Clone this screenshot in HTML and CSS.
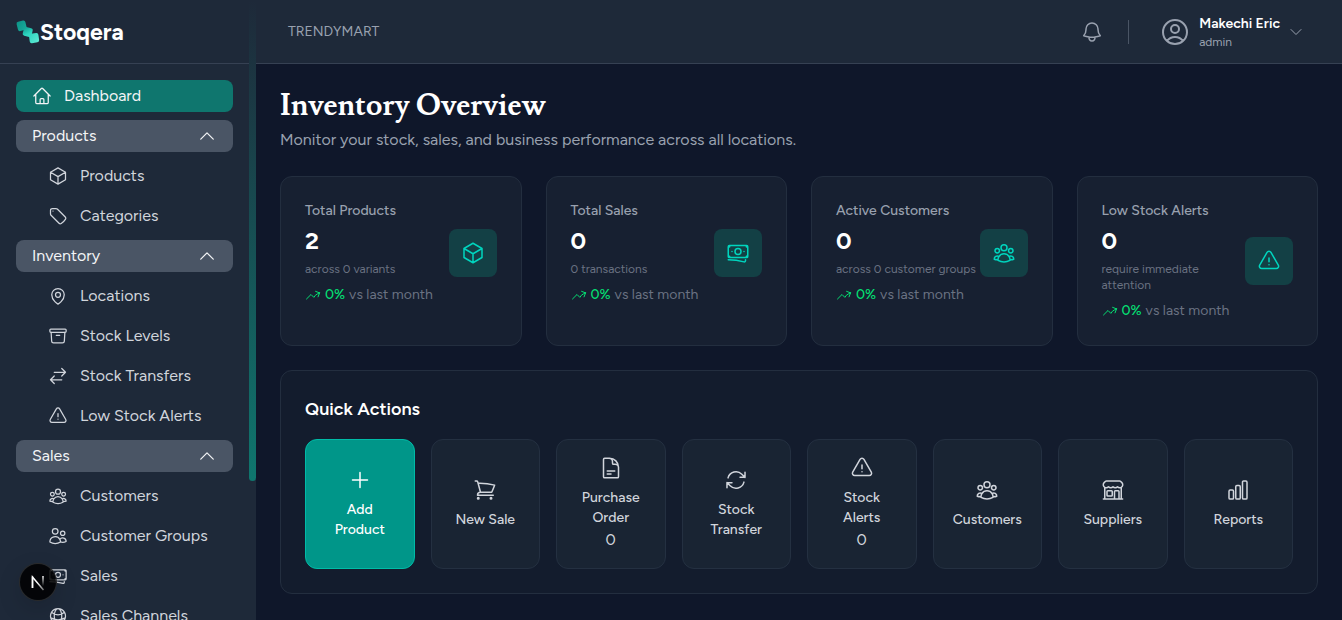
FILE: index.html
```html
<!DOCTYPE html>
<html lang="en">
<head>
<meta charset="utf-8">
<meta name="viewport" content="width=device-width, initial-scale=1">
<title>Stoqera</title>
<link rel="stylesheet" href="styles.css">
</head>
<body>
<svg class="sprite" aria-hidden="true">
  <symbol id="home" viewBox="0 0 24 24"><path d="M2.25 12l8.954-8.955c.44-.439 1.152-.439 1.591 0L21.75 12M4.5 9.75v10.125c0 .621.504 1.125 1.125 1.125H9.75v-4.875c0-.621.504-1.125 1.125-1.125h2.25c.621 0 1.125.504 1.125 1.125V21h4.125c.621 0 1.125-.504 1.125-1.125V9.75M8.25 21h8.25"/></symbol>
  <symbol id="cube" viewBox="0 0 24 24"><path d="M21 7.5l-9-5.25L3 7.5m18 0l-9 5.25m9-5.25v9l-9 5.25M3 7.5l9 5.25M3 7.5v9l9 5.25m0-9v9"/></symbol>
  <symbol id="tag" viewBox="0 0 24 24"><path d="M9.568 3H5.25A2.25 2.25 0 003 5.25v4.318c0 .597.237 1.17.659 1.591l9.581 9.581c.699.699 1.78.872 2.607.33a18.095 18.095 0 005.223-5.223c.542-.827.369-1.908-.33-2.607L11.16 3.66A2.25 2.25 0 009.568 3z"/><path d="M6 6h.008v.008H6V6z"/></symbol>
  <symbol id="pin" viewBox="0 0 24 24"><path d="M15 10.5a3 3 0 11-6 0 3 3 0 016 0z"/><path d="M19.5 10.5c0 7.142-7.5 11.25-7.5 11.25S4.5 17.642 4.5 10.5a7.5 7.5 0 1115 0z"/></symbol>
  <symbol id="archive" viewBox="0 0 24 24"><path d="M20.25 7.5l-.625 10.632a2.25 2.25 0 01-2.247 2.118H6.622a2.25 2.25 0 01-2.247-2.118L3.75 7.5M10 11.25h4M3.375 7.5h17.25c.621 0 1.125-.504 1.125-1.125v-1.5c0-.621-.504-1.125-1.125-1.125H3.375c-.621 0-1.125.504-1.125 1.125v1.5c0 .621.504 1.125 1.125 1.125z"/></symbol>
  <symbol id="transfer" viewBox="0 0 24 24"><path d="M7.5 21L3 16.5m0 0L7.5 12M3 16.5h13.5m0-13.5L21 7.5m0 0L16.5 12M21 7.5H7.5"/></symbol>
  <symbol id="alert" viewBox="0 0 24 24"><path d="M12 9v3.75m-9.303 3.376c-.866 1.5.217 3.374 1.948 3.374h14.71c1.73 0 2.813-1.874 1.948-3.374L13.949 3.378c-.866-1.5-3.032-1.5-3.898 0L2.697 16.126zM12 15.75h.007v.008H12v-.008z"/></symbol>
  <symbol id="group" viewBox="0 0 24 24"><path d="M18 18.72a9.094 9.094 0 003.741-.479 3 3 0 00-4.682-2.72m.94 3.198l.001.031c0 .225-.012.447-.037.666A11.944 11.944 0 0112 21c-2.17 0-4.207-.576-5.963-1.584A6.062 6.062 0 016 18.719m12 0a5.971 5.971 0 00-.941-3.197m0 0A5.995 5.995 0 0012 12.75a5.995 5.995 0 00-5.058 2.772m0 0a3 3 0 00-4.681 2.72 8.986 8.986 0 003.74.477m.94-3.197a5.971 5.971 0 00-.94 3.197M15 6.75a3 3 0 11-6 0 3 3 0 016 0zm6 3a2.25 2.25 0 11-4.5 0 2.25 2.25 0 014.5 0zm-13.5 0a2.25 2.25 0 11-4.5 0 2.25 2.25 0 014.5 0z"/></symbol>
  <symbol id="users" viewBox="0 0 24 24"><path d="M15 19.128a9.38 9.38 0 002.625.372 9.337 9.337 0 004.121-.952 4.125 4.125 0 00-7.533-2.493M15 19.128v-.003c0-1.113-.285-2.16-.786-3.07M15 19.128v.106A12.318 12.318 0 018.624 21c-2.331 0-4.512-.645-6.374-1.766l-.001-.109a6.375 6.375 0 0111.964-3.07M12 6.375a3.375 3.375 0 11-6.75 0 3.375 3.375 0 016.75 0zm8.25 2.25a2.625 2.625 0 11-5.25 0 2.625 2.625 0 015.25 0z"/></symbol>
  <symbol id="cash" viewBox="0 0 24 24"><path d="M2.25 18.75a60.07 60.07 0 0115.797 2.101c.727.198 1.453-.342 1.453-1.096V18.75M3.75 4.5v.75A.75.75 0 013 6h-.75m0 0v-.375c0-.621.504-1.125 1.125-1.125H20.25M2.25 6v9m18-10.5v.75c0 .414.336.75.75.75h.75m-1.5-1.5h.375c.621 0 1.125.504 1.125 1.125v9.75c0 .621-.504 1.125-1.125 1.125h-.375m1.5-1.5H21a.75.75 0 00-.75.75v.75m0 0H3.75m0 0h-.375a1.125 1.125 0 01-1.125-1.125V15m1.5 1.5v-.75A.75.75 0 003 15h-.75M15 10.5a3 3 0 11-6 0 3 3 0 016 0zm3 0h.008v.008H18V10.5zm-12 0h.008v.008H6V10.5z"/></symbol>
  <symbol id="globe" viewBox="0 0 24 24"><path d="M12 21a9.004 9.004 0 008.716-6.747M12 21a9.004 9.004 0 01-8.716-6.747M12 21c2.485 0 4.5-4.03 4.5-9S14.485 3 12 3m0 18c-2.485 0-4.5-4.03-4.5-9S9.515 3 12 3m0 0a8.997 8.997 0 017.843 4.582M12 3a8.997 8.997 0 00-7.843 4.582m15.686 0A11.953 11.953 0 0112 10.5c-2.998 0-5.74-1.1-7.843-2.918m15.686 0A8.959 8.959 0 0121 12c0 .778-.099 1.533-.284 2.253m0 0A17.919 17.919 0 0112 16.5c-3.162 0-6.133-.815-8.716-2.247m0 0A9.015 9.015 0 013 12c0-1.605.42-3.113 1.157-4.418"/></symbol>
  <symbol id="bell" viewBox="0 0 24 24"><path d="M14.857 17.082a23.848 23.848 0 005.454-1.31A8.967 8.967 0 0118 9.75v-.7V9A6 6 0 006 9v.75a8.967 8.967 0 01-2.312 6.022c1.733.64 3.56 1.085 5.455 1.31m5.714 0a24.255 24.255 0 01-5.714 0m5.714 0a3 3 0 11-5.714 0"/></symbol>
  <symbol id="user" viewBox="0 0 24 24"><path d="M17.982 18.725A7.488 7.488 0 0012 15.75a7.488 7.488 0 00-5.982 2.975m11.963 0a9 9 0 10-11.963 0m11.963 0A8.966 8.966 0 0112 21a8.966 8.966 0 01-5.982-2.275M15 9.75a3 3 0 11-6 0 3 3 0 016 0z"/></symbol>
  <symbol id="up" viewBox="0 0 24 24"><path d="M4.5 15.75l7.5-7.5 7.5 7.5"/></symbol>
  <symbol id="down" viewBox="0 0 24 24"><path d="M19.5 8.25l-7.5 7.5-7.5-7.5"/></symbol>
  <symbol id="trend" viewBox="0 0 24 24"><path d="M2.25 18L9 11.25l4.306 4.307a11.95 11.95 0 015.814-5.519l2.74-1.22m0 0l-5.94-2.28m5.94 2.28l-2.28 5.941"/></symbol>
  <symbol id="plus" viewBox="0 0 24 24"><path d="M12 4.5v15m7.5-7.5h-15"/></symbol>
  <symbol id="cart" viewBox="0 0 24 24"><path d="M2.25 3h1.386c.51 0 .955.343 1.087.835l.383 1.437M7.5 14.25a3 3 0 00-3 3h15.75m-12.75-3h11.218c1.121-2.3 2.1-4.684 2.924-7.138a60.114 60.114 0 00-16.536-1.84M7.5 14.25L5.106 5.272M6 20.25a.75.75 0 11-1.5 0 .75.75 0 011.5 0zm12.75 0a.75.75 0 11-1.5 0 .75.75 0 011.5 0z"/></symbol>
  <symbol id="doc" viewBox="0 0 24 24"><path d="M19.5 14.25v-2.625a3.375 3.375 0 00-3.375-3.375h-1.5A1.125 1.125 0 0113.5 7.125v-1.5a3.375 3.375 0 00-3.375-3.375H8.25m0 12.75h7.5m-7.5 3H12M10.5 2.25H5.625c-.621 0-1.125.504-1.125 1.125v17.25c0 .621.504 1.125 1.125 1.125h12.75c.621 0 1.125-.504 1.125-1.125V11.25a9 9 0 00-9-9z"/></symbol>
  <symbol id="refresh" viewBox="0 0 24 24"><path d="M16.023 9.348h4.992v-.001M2.985 19.644v-4.992m0 0h4.992m-4.993 0l3.181 3.183a8.25 8.25 0 0013.803-3.7M4.031 9.865a8.25 8.25 0 0113.803-3.7l3.181 3.182m0-4.991v4.99"/></symbol>
  <symbol id="store" viewBox="0 0 24 24"><path d="M13.5 21v-7.5a.75.75 0 01.75-.75h3a.75.75 0 01.75.75V21m-4.5 0H2.36m11.14 0H18m0 0h3.64m-1.39 0V9.349m-16.5 11.65V9.35m0 0a3.001 3.001 0 003.75-.615A2.993 2.993 0 009.75 9.75c.896 0 1.7-.393 2.25-1.016a2.993 2.993 0 002.25 1.016c.896 0 1.7-.393 2.25-1.016a3.001 3.001 0 003.75.614m-16.5 0a3.004 3.004 0 01-.621-4.72L4.318 3.44A1.5 1.5 0 015.378 3h13.243a1.5 1.5 0 011.06.44l1.19 1.189a3 3 0 01-.621 4.72m-13.5 8.65h3.75a.75.75 0 00.75-.75V13.5a.75.75 0 00-.75-.75H6.75a.75.75 0 00-.75.75v3.75c0 .415.336.75.75.75z"/></symbol>
  <symbol id="chart" viewBox="0 0 24 24"><path d="M3 13.125C3 12.504 3.504 12 4.125 12h2.25c.621 0 1.125.504 1.125 1.125v6.75C7.5 20.496 6.996 21 6.375 21h-2.25A1.125 1.125 0 013 19.875v-6.75zM9.75 8.625c0-.621.504-1.125 1.125-1.125h2.25c.621 0 1.125.504 1.125 1.125v11.25c0 .621-.504 1.125-1.125 1.125h-2.25a1.125 1.125 0 01-1.125-1.125V8.625zM16.5 4.125c0-.621.504-1.125 1.125-1.125h2.25C20.496 3 21 3.504 21 4.125v15.75c0 .621-.504 1.125-1.125 1.125h-2.25a1.125 1.125 0 01-1.125-1.125V4.125z"/></symbol>
</svg>

<div class="app">
  <aside class="sidebar">
    <div class="brand">
      <svg class="brand-mark" viewBox="0 0 24 24" aria-hidden="true">
        <defs>
          <linearGradient id="markFill" gradientUnits="userSpaceOnUse" x1="2" y1="1" x2="22" y2="23">
            <stop offset="0" stop-color="#0d9488"/><stop offset=".35" stop-color="#17a899"/><stop offset=".55" stop-color="#2dd4bf"/><stop offset="1" stop-color="#5eead4"/>
          </linearGradient>
        </defs>
        <g fill="url(#markFill)">
          <rect x="1.2" y="1" width="9" height="9.5" rx="2" transform="rotate(-14 6 6)"/>
          <rect x="7.2" y="7.5" width="9" height="9" rx="2" transform="rotate(14 12 12)"/>
          <rect x="13.3" y="13.3" width="9.5" height="9.5" rx="2" transform="rotate(-8 18 18)"/>
        </g>
      </svg>
      <span class="brand-name">Stoqera</span>
    </div>
    <nav class="nav" aria-label="Main">
      <a class="nav-item nav-item-active" href="#"><svg class="icon"><use href="#home"/></svg>Dashboard</a>
      <button class="nav-section" type="button">Products<svg class="icon"><use href="#up"/></svg></button>
      <a class="nav-item nav-sub" href="#"><svg class="icon"><use href="#cube"/></svg>Products</a>
      <a class="nav-item nav-sub" href="#"><svg class="icon"><use href="#tag"/></svg>Categories</a>
      <button class="nav-section" type="button">Inventory<svg class="icon"><use href="#up"/></svg></button>
      <a class="nav-item nav-sub" href="#"><svg class="icon"><use href="#pin"/></svg>Locations</a>
      <a class="nav-item nav-sub" href="#"><svg class="icon"><use href="#archive"/></svg>Stock Levels</a>
      <a class="nav-item nav-sub" href="#"><svg class="icon"><use href="#transfer"/></svg>Stock Transfers</a>
      <a class="nav-item nav-sub" href="#"><svg class="icon"><use href="#alert"/></svg>Low Stock Alerts</a>
      <button class="nav-section" type="button">Sales<svg class="icon"><use href="#up"/></svg></button>
      <a class="nav-item nav-sub" href="#"><svg class="icon"><use href="#group"/></svg>Customers</a>
      <a class="nav-item nav-sub" href="#"><svg class="icon"><use href="#users"/></svg>Customer Groups</a>
      <a class="nav-item nav-sub" href="#"><svg class="icon"><use href="#cash"/></svg>Sales</a>
      <a class="nav-item nav-sub" href="#"><svg class="icon"><use href="#globe"/></svg>Sales Channels</a>
    </nav>
    <div class="scroll-thumb"></div>
  </aside>

  <div class="content">
    <header class="topbar">
      <span class="store-name">TRENDYMART</span>
      <div class="topbar-tools">
        <button class="bell" type="button" aria-label="Notifications"><svg class="icon icon-lg"><use href="#bell"/></svg></button>
        <span class="divider"></span>
        <button class="account" type="button">
          <svg class="icon icon-xl"><use href="#user"/></svg>
          <span class="account-text"><span class="account-name">Makechi Eric</span><span class="account-role">admin</span></span>
          <svg class="icon icon-sm account-arrow"><use href="#down"/></svg>
        </button>
      </div>
    </header>

    <main class="main">
      <div class="page-head">
        <h1 class="page-title">Inventory Overview</h1>
        <p class="page-subtitle">Monitor your stock, sales, and business performance across all locations.</p>
      </div>

      <section class="stats" aria-label="Key figures">
        <article class="card"><div class="card-row">
          <div class="card-text"><h2 class="card-label">Total Products</h2><p class="card-value">2</p><p class="card-note">across 0 variants</p>
            <p class="card-trend"><svg class="icon icon-sm"><use href="#trend"/></svg><b class="trend-value">0%</b><span>vs last month</span></p></div>
          <div class="card-icon"><svg class="icon icon-lg"><use href="#cube"/></svg></div>
        </div></article>
        <article class="card"><div class="card-row">
          <div class="card-text"><h2 class="card-label">Total Sales</h2><p class="card-value">0</p><p class="card-note">0 transactions</p>
            <p class="card-trend"><svg class="icon icon-sm"><use href="#trend"/></svg><b class="trend-value">0%</b><span>vs last month</span></p></div>
          <div class="card-icon"><svg class="icon icon-lg"><use href="#cash"/></svg></div>
        </div></article>
        <article class="card"><div class="card-row">
          <div class="card-text"><h2 class="card-label">Active Customers</h2><p class="card-value">0</p><p class="card-note">across 0 customer groups</p>
            <p class="card-trend"><svg class="icon icon-sm"><use href="#trend"/></svg><b class="trend-value">0%</b><span>vs last month</span></p></div>
          <div class="card-icon"><svg class="icon icon-lg"><use href="#group"/></svg></div>
        </div></article>
        <article class="card"><div class="card-row">
          <div class="card-text"><h2 class="card-label">Low Stock Alerts</h2><p class="card-value">0</p><p class="card-note">require immediate attention</p>
            <p class="card-trend"><svg class="icon icon-sm"><use href="#trend"/></svg><b class="trend-value">0%</b><span>vs last month</span></p></div>
          <div class="card-icon"><svg class="icon icon-lg"><use href="#alert"/></svg></div>
        </div></article>
      </section>

      <section class="panel">
        <h2 class="panel-title">Quick Actions</h2>
        <div class="actions">
          <button class="action action-primary" type="button"><svg class="icon icon-lg"><use href="#plus"/></svg><span class="action-label">Add Product</span></button>
          <button class="action" type="button"><svg class="icon icon-lg"><use href="#cart"/></svg><span class="action-label">New Sale</span></button>
          <button class="action" type="button"><svg class="icon icon-lg"><use href="#doc"/></svg><span class="action-label">Purchase Order</span><span class="action-count">0</span></button>
          <button class="action" type="button"><svg class="icon icon-lg"><use href="#refresh"/></svg><span class="action-label">Stock Transfer</span></button>
          <button class="action" type="button"><svg class="icon icon-lg"><use href="#alert"/></svg><span class="action-label">Stock Alerts</span><span class="action-count">0</span></button>
          <button class="action" type="button"><svg class="icon icon-lg"><use href="#group"/></svg><span class="action-label">Customers</span></button>
          <button class="action" type="button"><svg class="icon icon-lg"><use href="#store"/></svg><span class="action-label">Suppliers</span></button>
          <button class="action" type="button"><svg class="icon icon-lg"><use href="#chart"/></svg><span class="action-label">Reports</span></button>
        </div>
      </section>
    </main>
  </div>
</div>

<button class="dev-badge" type="button" aria-label="Open developer tools">
  <svg class="dev-mark" viewBox="0 0 36 36" fill="none" aria-hidden="true">
    <defs>
      <linearGradient id="stemFade" gradientUnits="userSpaceOnUse" x1="0" y1="12" x2="0" y2="22"><stop stop-color="#fff"/><stop offset="1" stop-color="#fff" stop-opacity="0"/></linearGradient>
      <linearGradient id="legFade" gradientUnits="userSpaceOnUse" x1="18" y1="18" x2="24" y2="26"><stop stop-color="#fff"/><stop offset="1" stop-color="#fff" stop-opacity=".4"/></linearGradient>
    </defs>
    <path d="M12.500 24V13L23.500 26" stroke="url(#legFade)" stroke-width="1.500"/>
    <path d="M12.500 24V12.500" stroke="#fff" stroke-width="1.500"/>
    <path d="M23 12v10" stroke="url(#stemFade)" stroke-width="1.500"/>
  </svg>
</button>
</body>
</html>
```

FILE: styles.css
```css
*, *::before, *::after { box-sizing: border-box; }

body {
  margin: 0;
  background: #0f172a;
  color: #d1d5dc;
  font-family: Figtree, Inter, "Liberation Sans", sans-serif;
  font-size: 16px;
  line-height: 24px;
}

h1, h2, p { margin: 0; }

button {
  margin: 0;
  padding: 0;
  border: 0;
  background: none;
  color: inherit;
  font: inherit;
  cursor: pointer;
}

a { color: inherit; text-decoration: none; }

.sprite { display: none; }

.icon {
  display: block;
  flex: none;
  width: 20px;
  height: 20px;
  fill: none;
  stroke: currentColor;
  stroke-width: 1.5;
  stroke-linecap: round;
  stroke-linejoin: round;
}
.icon-sm { width: 16px; height: 16px; }
.icon-lg { width: 24px; height: 24px; }
.icon-xl { width: 32px; height: 32px; }

.app { display: flex; min-height: 100vh; }

/* Sidebar */
.sidebar {
  position: sticky;
  top: 0;
  flex: none;
  width: 256px;
  height: 100vh;
  padding-right: 7px;
  overflow: hidden;
  background: #1e2939;
}
.brand {
  display: flex;
  align-items: center;
  height: 64px;
  padding: 0 16px;
  border-bottom: 1px solid #364153;
}
.brand-mark { width: 24px; height: 24px; }
.brand-name {
  color: #fff;
  font-size: 23px;
  font-weight: 700;
  line-height: 32px;
}
.nav { display: flex; flex-direction: column; gap: 8px; padding: 16px; }
.nav-item, .nav-section {
  display: flex;
  flex: none;
  align-items: center;
  height: 32px;
  padding: 0 16px;
  border-radius: 8px;
}
.nav-item { gap: 12px; }
.nav-item-active { background: #0f766e; color: #f3f4f6; }
.nav-sub { padding-left: 32px; }
.nav-section { justify-content: space-between; background: #4a5565; color: #f3f4f6; }
.scroll-thumb {
  position: absolute;
  top: 0;
  right: 0;
  width: 7px;
  height: 481px;
  border-radius: 4px;
  background: linear-gradient(rgba(15, 118, 110, 0), #0f766e);
}

/* Top bar */
.content { flex: 1; min-width: 0; }
.topbar {
  display: flex;
  align-items: center;
  justify-content: space-between;
  height: 64px;
  padding: 0 32px;
  border-bottom: 1px solid #364153;
  background: #1e2939;
}
.store-name { color: #99a1af; font-size: 14px; line-height: 20px; }
.topbar-tools { display: flex; align-items: center; gap: 24px; color: #99a1af; }
.divider { width: 1px; height: 24px; background: #4a5565; }
.account { display: flex; align-items: center; gap: 8px; padding: 0 6px; text-align: left; }
.account-text { display: flex; flex-direction: column; }
.account-name { color: #fff; font-size: 14px; font-weight: 600; line-height: 20px; }
.account-role { font-size: 12px; line-height: 16px; }
.account-arrow { color: #99a1af; }

/* Page */
.main { display: flex; flex-direction: column; gap: 24px; padding: 24px; }
.page-head { display: flex; flex-direction: column; gap: 4px; }
.page-title {
  color: #fff;
  font-family: Lusitana, Lustria, "Liberation Serif", serif;
  font-size: 30px;
  font-weight: 700;
  line-height: 36px;
}
.page-subtitle { color: #99a1af; }

.stats { display: grid; grid-template-columns: repeat(4, minmax(0, 1fr)); gap: 24px; }
.card {
  padding: 24px;
  border: 1px solid #232e3f;
  border-radius: 12px;
  background: #172031;
}
.card-row { display: flex; align-items: center; justify-content: space-between; }
.card-label { color: #99a1af; font-size: 14px; font-weight: 500; line-height: 20px; }
.card-value { margin-top: 4px; color: #fff; font-size: 24px; font-weight: 700; line-height: 32px; }
.card-note { margin-top: 4px; color: #6a7282; font-size: 12px; line-height: 16px; }
.card-trend {
  display: flex;
  align-items: center;
  gap: 4px;
  margin-top: 8px;
  color: #6a7282;
  font-size: 14px;
  line-height: 20px;
  white-space: nowrap;
}
.card-trend .icon { color: #05df72; }
.trend-value { color: #05df72; font-weight: 500; }
.card-icon {
  display: grid;
  flex: none;
  place-items: center;
  width: 48px;
  height: 48px;
  border-radius: 8px;
  background: #134045;
  color: #00d5be;
}

.panel {
  padding: 24px;
  border: 1px solid #232e3f;
  border-radius: 12px;
  background: #131c2d;
}
.panel-title { margin-bottom: 16px; color: #fff; font-size: 18px; font-weight: 600; line-height: 28px; }
.actions { display: grid; grid-template-columns: repeat(8, minmax(0, 1fr)); gap: 16px; }
.action {
  display: flex;
  flex-direction: column;
  align-items: center;
  justify-content: center;
  min-height: 130px;
  padding: 16px;
  border: 1px solid #243041;
  border-radius: 12px;
  background: #192433;
  text-align: center;
}
.action-primary { border-color: #00bba7; background: #009689; color: #fff; }
.action-label { margin-top: 8px; font-size: 14px; font-weight: 500; line-height: 20px; }

/* Developer badge */
.dev-badge {
  position: fixed;
  bottom: 20px;
  left: 20px;
  width: 36px;
  height: 36px;
  border-radius: 50%;
  background: rgba(0, 0, 0, .86);
  box-shadow: 0 0 0 1px #2a2a2a, 0 8px 24px rgba(0, 0, 0, .15);
}
.dev-mark { display: block; width: 36px; height: 36px; }
```
